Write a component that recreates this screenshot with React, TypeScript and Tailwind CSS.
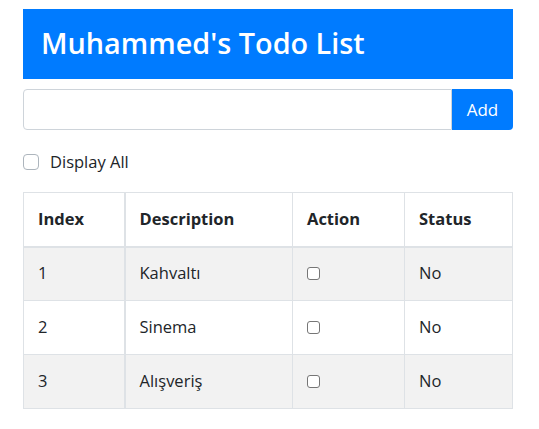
const TODOS = [
  { index: 1, description: "Kahvaltı", done: false },
  { index: 2, description: "Sinema", done: false },
  { index: 3, description: "Alışveriş", done: false },
];

function SmallBox() {
  return <span className="block h-[13px] w-[13px] rounded-[3px] border border-[#767676] bg-white" />;
}

export default function App() {
  return (
    <div
      className="min-h-screen bg-white text-[#212529]"
      style={{ fontFamily: '"Open Sans", "Noto Sans", sans-serif' }}
    >
      <div className="ml-[23px] w-[490px] pt-[9px]">
        {/* Header */}
        <h3 className="flex h-[70px] items-center bg-[#007bff] px-[18px] pb-[2px] text-[28.8px] font-semibold text-white">
          Muhammed's Todo List
        </h3>

        {/* Input */}
        <div className="mt-[10px] flex h-[41px]">
          <input className="flex-1 rounded-l-[4px] border border-[#ced4da] px-3 text-base outline-none" />
          <button className="w-[61px] rounded-r-[4px] bg-[#007bff] text-[17px] text-white">Add</button>
        </div>

        {/* Display all */}
        <label className="mt-[20px] flex h-[24px] items-center gap-[11px] text-[16.5px]">
          <span className="block h-4 w-4 rounded-[4px] border border-[#adb5bd] bg-white" />
          Display All
        </label>

        {/* Table */}
        <table className="mt-[18px] w-full border-collapse border border-[#dee2e6] text-[16.5px]">
          <thead>
            <tr className="h-[54px] border-b-2 border-[#dee2e6] text-left font-bold">
              <th className="w-[101px] border-r-2 border-[#dee2e6] px-[14px]">Index</th>
              <th className="w-[168px] border-r border-[#dee2e6] px-[14px]">Description</th>
              <th className="w-[112px] border-r border-[#dee2e6] px-[14px]">Action</th>
              <th className="px-[14px]">Status</th>
            </tr>
          </thead>
          <tbody>
            {TODOS.map((t, i) => (
              <tr
                key={t.index}
                className={`h-[54px] border-t border-[#dee2e6] ${i % 2 === 0 ? "bg-[#f2f2f2]" : "bg-white"}`}
              >
                <td className="border-r-2 border-[#dee2e6] px-[14px]">{t.index}</td>
                <td className="border-r border-[#dee2e6] px-[14px]">{t.description}</td>
                <td className="border-r border-[#dee2e6] px-[14px]">
                  <SmallBox />
                </td>
                <td className="px-[14px]">{t.done ? "Yes" : "No"}</td>
              </tr>
            ))}
          </tbody>
        </table>
      </div>
    </div>
  );
}
